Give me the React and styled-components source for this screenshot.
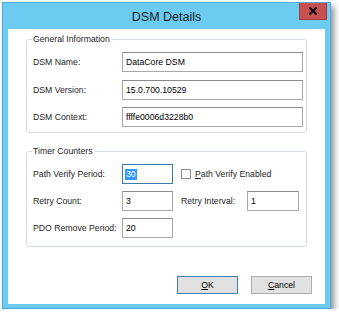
import { Fragment } from 'react';
import styled, { createGlobalStyle } from 'styled-components';

const GlobalStyle = createGlobalStyle`
  html, body {
    margin: 0;
    padding: 0;
    background: #fff;
  }
  body {
    font-family: "Liberation Sans", Arial, sans-serif;
  }
`;

const Page = styled.div`
  padding: 2px 0 0 2px;
`;

const Window = styled.div`
  width: 329px;
  height: 307px;
  box-sizing: border-box;
  display: flex;
  flex-direction: column;
  background: #6bcbf0;
  border: 1px solid #52acd8;
  box-shadow: 3px 4px 6px rgba(0, 0, 0, 0.45);
`;

const TitleBar = styled.div`
  height: 26px;
  display: grid;
  grid-template-columns: 1fr auto 1fr;
  align-items: start;
`;

const Title = styled.div`
  grid-column: 2;
  align-self: center;
  font-size: 12.5px;
  color: #1c1c1c;
  padding-top: 1px;
`;

const CloseButton = styled.div`
  grid-column: 3;
  justify-self: end;
  margin-right: 3px;
  width: 28px;
  height: 17px;
  box-sizing: border-box;
  display: flex;
  align-items: center;
  justify-content: center;
  background: #c75050;
  border: 1px solid #a53c3c;
  border-top: none;
`;

const Client = styled.div`
  flex: 1;
  margin: 0 5px 4px 5px;
  padding: 5px 13px 0 18px;
  background: #fff;
  display: flex;
  flex-direction: column;
`;

const Group = styled.fieldset`
  margin: ${p => (p.$first ? '0' : '13px')} 5px 0 0;
  padding: 8px 3px ${p => p.$bottom}px 5px;
  min-width: 0;
  border: 1px solid #d8dde3;
  border-radius: 3px;
`;

const Legend = styled.legend`
  padding: 0 1px;
  font-size: 8.7px;
  line-height: 10px;
  color: #1e1e1e;
`;

const Grid = styled.div`
  display: grid;
  grid-template-columns: ${p => p.$cols};
  grid-auto-rows: 20px;
  row-gap: ${p => p.$gap}px;
  align-items: center;
`;

const Label = styled.div`
  font-size: 8.7px;
  color: #1e1e1e;
  padding-left: ${p => (p.$indent ? 8 : 1)}px;
  white-space: nowrap;
`;

const Field = styled.div`
  height: 20px;
  box-sizing: border-box;
  display: flex;
  align-items: center;
  padding-left: ${p => (p.$focused ? 2 : 3)}px;
  font-size: 8.7px;
  color: #000;
  border: 1px solid ${p => (p.$focused ? '#3d7bad' : '#a8a8a8')};
  border-top-color: ${p => (p.$focused ? '#3d7bad' : '#8c8c8c')};
  background: #fff;
`;

const Selected = styled.span`
  background: #3399ff;
  color: #fff;
  line-height: 11px;
  padding: 0 1px;
`;

const CheckRow = styled.div`
  grid-column: 3 / span 2;
  display: flex;
  align-items: center;
  gap: 4px;
  padding-left: 8px;
  font-size: 8.7px;
  color: #1e1e1e;
`;

const CheckBox = styled.div`
  width: 10px;
  height: 10px;
  box-sizing: border-box;
  border: 1px solid #8e8f8f;
  background: #fff;
`;

const Buttons = styled.div`
  margin-top: 29px;
  display: flex;
  justify-content: flex-end;
  gap: 13px;
`;

const Button = styled.div`
  width: 61px;
  height: 18px;
  box-sizing: border-box;
  display: flex;
  align-items: center;
  justify-content: center;
  font-size: 8.7px;
  color: #000;
  background: #e1e1e1;
  border: 1px solid ${p => (p.$default ? '#3c7fb1' : '#adadad')};
`;

const CloseIcon = () => (
  <svg width="8" height="8" viewBox="0 0 8 8">
    <path d="M1 1 L7 7 M7 1 L1 7" stroke="#111" strokeWidth="2.2" strokeLinecap="square" />
  </svg>
);

const App = () => {
  const general = [
    { label: 'DSM Name:', value: 'DataCore DSM' },
    { label: 'DSM Version:', value: '15.0.700.10529' },
    { label: 'DSM Context:', value: 'ffffe0006d3228b0' },
  ];

  return (
    <Page>
      <GlobalStyle />
      <Window>
        <TitleBar>
          <Title>DSM Details</Title>
          <CloseButton>
            <CloseIcon />
          </CloseButton>
        </TitleBar>
        <Client>
          <Group $first $bottom={5}>
            <Legend>General Information</Legend>
            <Grid $cols="90px 1fr" $gap={7.5}>
              {general.map(row => (
                <Fragment key={row.label}>
                  <Label>{row.label}</Label>
                  <Field>{row.value}</Field>
                </Fragment>
              ))}
            </Grid>
          </Group>
          <Group $bottom={8}>
            <Legend>Timer Counters</Legend>
            <Grid $cols="90px 51px 74px 52px" $gap={7}>
              <Label>Path Verify Period:</Label>
              <Field $focused>
                <Selected>30</Selected>
              </Field>
              <CheckRow>
                <CheckBox />
                <span>
                  <u>P</u>ath Verify Enabled
                </span>
              </CheckRow>
              <Label>Retry Count:</Label>
              <Field>3</Field>
              <Label $indent>Retry Interval:</Label>
              <Field>1</Field>
              <Label>PDO Remove Period:</Label>
              <Field>20</Field>
            </Grid>
          </Group>
          <Buttons>
            <Button $default>
              <span>
                <u>O</u>K
              </span>
            </Button>
            <Button>
              <span>
                <u>C</u>ancel
              </span>
            </Button>
          </Buttons>
        </Client>
      </Window>
    </Page>
  );
};

export default App;
